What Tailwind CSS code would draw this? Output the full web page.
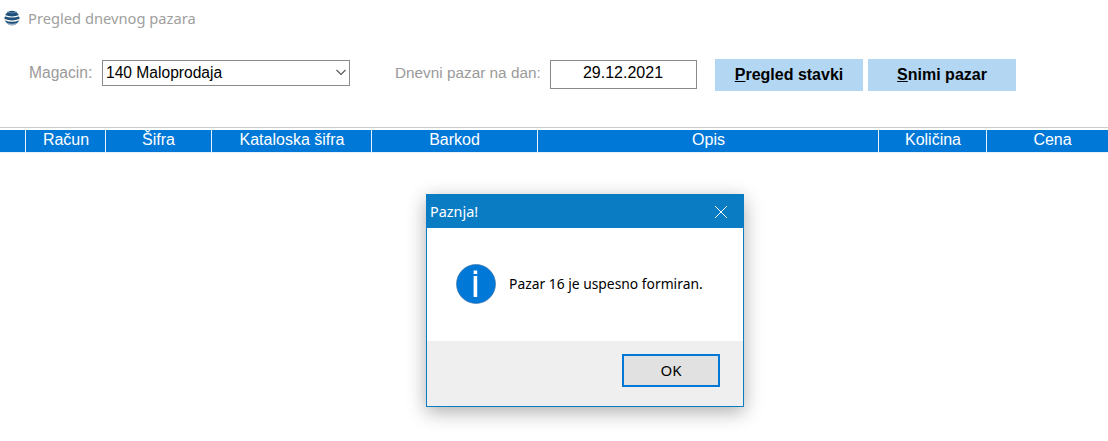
<!DOCTYPE html>
<html lang="sr">
<head>
<meta charset="UTF-8">
<title>Pregled dnevnog pazara</title>
<script src="https://cdn.jsdelivr.net/npm/@tailwindcss/browser@4"></script>
</head>
<body class="bg-white relative w-[1108px] h-[441px] overflow-hidden font-['Liberation_Sans',sans-serif]">
    <!-- naslov -->
    <div class="flex items-center h-[36px] pl-[4px] gap-[8px]">
        <svg width="16" height="16" viewBox="0 0 16 16">
            <ellipse cx="8" cy="8" rx="7.5" ry="7.2" fill="#1f4e79"/>
            <path d="M3 2 Q8 4 13 2" stroke="#6f8fae" stroke-width="0.8" fill="none"/>
            <path d="M0.6 5.6 Q8 8.4 15.4 5.6" stroke="#fff" stroke-width="1.2" fill="none"/>
            <path d="M0.6 9.6 Q8 12.6 15.4 9.6" stroke="#fff" stroke-width="1.2" fill="none"/>
            <path d="M2.2 12.4 Q8 15 13.8 12.4 Q12 15.4 8 15.4 Q4 15.4 2.2 12.4 Z" fill="#9fb3c8"/>
        </svg>
        <span class="font-['Noto_Sans',sans-serif] text-[14.7px] text-[#a0a0a0]">Pregled dnevnog pazara</span>
    </div>

    <!-- filteri -->
    <div class="flex items-start h-[33px] mt-[23px] pl-[29px] text-[15.33px]">
        <label class="text-[#9a9a9a] w-[73px] leading-[28px] text-[15.6px]">Magacin:</label>
        <div class="relative w-[248px] h-[26px] mt-[1px] border border-[#8a8a8a] flex items-center pl-[3px] text-black text-[15.6px]">
            <span>140 Maloprodaja</span>
            <svg class="absolute right-[3px] top-[8px]" width="10" height="7" viewBox="0 0 10 7"><path d="M0.5 1 L5 5.5 L9.5 1" stroke="#555" stroke-width="1.1" fill="none"/></svg>
        </div>
        <label class="text-[#9a9a9a] ml-[45px] w-[155px] leading-[28px]">Dnevni pazar na dan:</label>
        <div class="w-[147px] h-[29px] mt-[1px] border border-[#8a8a8a] flex items-center justify-center text-black text-[16px] pb-[3px] pr-[1px]">29.12.2021</div>
        <button class="ml-[18px] w-[148px] h-[32px] bg-[#b3d7f3] font-bold text-black text-[16px]"><u>P</u>regled stavki</button>
        <button class="ml-[5px] w-[148px] h-[32px] bg-[#b3d7f3] font-bold text-black text-[16px]"><u>S</u>nimi pazar</button>
    </div>

    <!-- tabela -->
    <div class="mt-[35px] border-t border-[#cccccc] pt-[2px]">
        <div class="flex h-[22px] bg-[#0078d7] text-white text-[16px] text-center leading-[20px]">
            <div class="w-[26px] border-r border-white/90"></div>
            <div class="w-[80px] border-r border-white/90 pl-[1px]">Račun</div>
            <div class="w-[106px] border-r border-white/90">Šifra</div>
            <div class="w-[160px] border-r border-white/90 pl-[1px]">Kataloska šifra</div>
            <div class="w-[166px] border-r border-white/90">Barkod</div>
            <div class="w-[341px] border-r border-white/90 pl-[1px]">Opis</div>
            <div class="w-[108px] border-r border-white/90 pl-[1px]">Količina</div>
            <div class="flex-1 pl-[10px]">Cena</div>
        </div>
        <div class="h-[1px] bg-[#e6f1fb]"></div>
    </div>

    <!-- dijalog -->
    <div class="absolute left-[426px] top-[194px] w-[318px] h-[213px] border border-[#0a7cc4] bg-white flex flex-col shadow-[0_5px_18px_rgba(0,0,0,0.32)] font-['Noto_Sans',sans-serif]">
        <div class="h-[33px] bg-[#0a7cc4] flex items-center justify-between pl-[3px] pr-[15px] text-white text-[14.4px]">
            <span>Paznja!</span>
            <svg width="14" height="14" viewBox="0 0 14 14"><path d="M1 1 L13 13 M13 1 L1 13" stroke="#fff" stroke-width="1" fill="none"/></svg>
        </div>
        <div class="flex-1 flex items-center pl-[29px] gap-[13px] pb-[1px] text-[13.85px] text-black">
            <svg width="40" height="40" viewBox="0 0 40 40">
                <circle cx="20" cy="20" r="19.5" fill="#0078d7" stroke="#3a6ea5" stroke-width="0.6"/>
                <rect x="17.6" y="12" width="3.6" height="21" fill="#fff"/>
                <rect x="17.6" y="6.5" width="3.6" height="3.5" fill="#fff"/>
            </svg>
            <span>Pazar 16 je uspesno formiran.</span>
        </div>
        <div class="h-[65px] bg-[#efefef] flex items-start justify-end pt-[13px] pr-[23px]">
            <button class="w-[98px] h-[33px] bg-[#e1e1e1] border-2 border-[#0078d7] text-[15px] text-black">OK</button>
        </div>
    </div>
</body>
</html>
